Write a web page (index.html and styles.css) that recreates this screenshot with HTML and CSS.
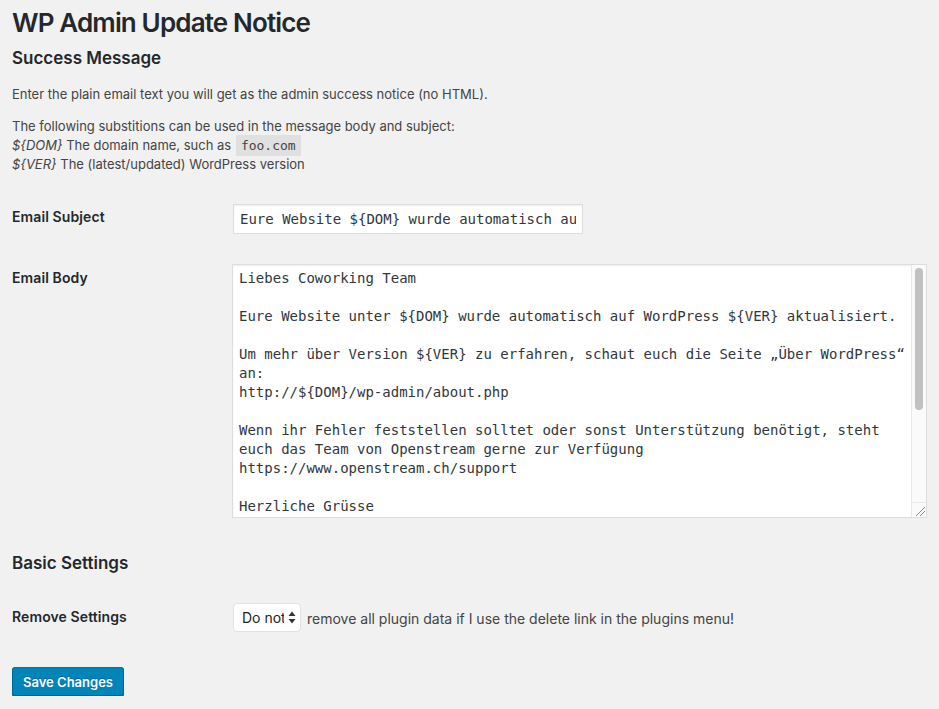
FILE: index.html
```html
<!DOCTYPE html>
<html lang="de">
<head>
<meta charset="utf-8">
<title>WP Admin Update Notice</title>
<link rel="stylesheet" href="styles.css">
</head>
<body>
<div class="wrap">
  <h1 class="page-title">WP Admin Update Notice</h1>
  <h2 class="section-title">Success Message</h2>
  <p class="desc">Enter the plain email text you will get as the admin success notice (no HTML).</p>
  <p class="desc">The following substitions can be used in the message body and subject:<br>
    <em>${DOM}</em> The domain name, such as <code>foo.com</code><br>
    <em>${VER}</em> The (latest/updated) WordPress version</p>

  <div class="form-table">
    <div class="row">
      <div class="th">Email Subject</div>
      <div class="td"><input class="regular-text" type="text" value="Eure Website ${DOM} wurde automatisch auf WordPress ${VER} aktualisiert"></div>
    </div>
    <div class="row">
      <div class="th">Email Body</div>
      <div class="td">
        <div class="textarea-wrap">
          <textarea class="large-text" wrap="off">Liebes Coworking Team

Eure Website unter ${DOM} wurde automatisch auf WordPress ${VER} aktualisiert.

Um mehr über Version ${VER} zu erfahren, schaut euch die Seite „Über WordPress“
an:
http://${DOM}/wp-admin/about.php

Wenn ihr Fehler feststellen solltet oder sonst Unterstützung benötigt, steht
euch das Team von Openstream gerne zur Verfügung
https://www.openstream.ch/support

Herzliche Grüsse
Euer Openstream Team

--
Openstream Internet Solutions
https://www.openstream.ch
</textarea>
          <div class="scrollbar" aria-hidden="true"><div class="thumb"></div></div>
          <div class="resizer" aria-hidden="true">
            <svg width="13" height="13" viewBox="0 0 13 13"><path d="M3 12 L12 3 M7 12 L12 7" stroke="#8a8a8a" stroke-width="1" fill="none"/></svg>
          </div>
        </div>
      </div>
    </div>
  </div>

  <h2 class="section-title basic">Basic Settings</h2>

  <div class="form-table">
    <div class="row">
      <div class="th">Remove Settings</div>
      <div class="td inline">
        <select class="small-select">
          <option>Do not</option>
          <option>Do</option>
        </select>
        <span class="inline-text">remove all plugin data if I use the delete link in the plugins menu!</span>
      </div>
    </div>
  </div>

  <p class="submit"><button class="button-primary" type="button">Save Changes</button></p>
</div>
</body>
</html>
```
FILE: styles.css
```css
html, body {
  margin: 0;
  padding: 0;
  background: #f1f1f1;
}

body {
  font-family: "Inter", "Liberation Sans", sans-serif;
  font-size: 13px;
  line-height: 1.5;
  color: #444;
}

.wrap {
  padding: 0 12px;
}

.page-title {
  margin: 0;
  padding: 6px 0 0;
  font-size: 26px;
  line-height: 34px;
  font-weight: 600;
  color: #23282d;
  letter-spacing: -0.85px;
}

.section-title {
  margin: 6px 0 14px;
  font-size: 17px;
  line-height: 25px;
  font-weight: 600;
  color: #23282d;
}

.desc {
  margin: 13px 0;
  line-height: 19px;
}

.desc em {
  font-style: italic;
}

code {
  font-family: "DejaVu Sans Mono", monospace;
  font-size: 13px;
  background: #e0e0e0;
  padding: 3px 5px;
  margin: 0 1px;
}

.form-table {
  margin-top: 14px;
}

.row {
  display: grid;
  grid-template-columns: 220px 1fr;
}

.th {
  padding: 20px 10px 20px 0;
  font-size: 14px;
  line-height: 18px;
  font-weight: 600;
  color: #23282d;
  letter-spacing: 0.1px;
}

.td {
  padding: 15px 0;
}

.td.inline {
  display: flex;
  align-items: center;
  gap: 6px;
  align-self: start;
}

.regular-text {
  box-sizing: border-box;
  width: 350px;
  height: 30px;
  margin: 1px 0 0 1px;
  padding: 2px 6px;
  border: 1px solid #ddd;
  box-shadow: inset 0 1px 2px rgba(0,0,0,.07);
  background: #fff;
  color: #32373c;
  font-family: "DejaVu Sans Mono", monospace;
  font-size: 14px;
  outline: none;
  display: block;
}

.textarea-wrap {
  position: relative;
  margin-top: 0;
}

.large-text {
  box-sizing: border-box;
  display: block;
  width: 100%;
  height: 254px;
  margin: 0;
  padding: 4px 22px 3px 6px;
  border: 1px solid #ddd;
  box-shadow: inset 0 1px 2px rgba(0,0,0,.07);
  background: #fff;
  color: #32373c;
  font-family: "DejaVu Sans Mono", monospace;
  font-size: 14px;
  line-height: 19px;
  white-space: pre;
  overflow: hidden;
  resize: none;
  outline: none;
}

.scrollbar {
  position: absolute;
  top: 1px;
  right: 1px;
  bottom: 15px;
  width: 15px;
  box-sizing: border-box;
  background: #fafafa;
  border-left: 1px solid #e8e8e8;
}

.thumb {
  margin: 3px 0 0 3px;
  width: 8px;
  height: 142px;
  border-radius: 4px;
  background: #c1c1c1;
}

.resizer {
  position: absolute;
  right: 1px;
  bottom: 1px;
  width: 15px;
  height: 15px;
  box-sizing: border-box;
  background: #fafafa;
  border-top: 1px solid #e8e8e8;
  border-left: 1px solid #e8e8e8;
  display: flex;
  align-items: flex-end;
  justify-content: flex-end;
}

.resizer svg {
  display: block;
}

.section-title.basic {
  margin: 18px 0 12px;
}

.basic + .form-table {
  margin-top: 0;
}

.small-select {
  -webkit-appearance: none;
  appearance: none;
  box-sizing: border-box;
  width: 68px;
  height: 29px;
  margin: 0 0 1px 1px;
  padding: 0 16px 0 8px;
  border: 1px solid #e2e2e2;
  border-radius: 4px;
  background: #fff url("data:image/svg+xml;utf8,<svg xmlns='http://www.w3.org/2000/svg' width='8' height='13' viewBox='0 0 8 13'><path d='M4 0.5 L7.5 5 H0.5 Z M4 12.5 L7.5 8 H0.5 Z' fill='%23333'/></svg>") no-repeat right 4px center;
  font-family: "Inter", "Liberation Sans", sans-serif;
  font-size: 14px;
  color: #222;
  outline: none;
}

.inline-text {
  font-size: 14px;
  color: #444;
}

.submit {
  margin: 19px 0 0;
  padding: 0;
}

.button-primary {
  box-sizing: border-box;
  height: 29px;
  padding: 0 10px;
  border: 1px solid;
  border-color: #0073aa #006799 #006799;
  border-radius: 3px;
  background: #0085ba;
  box-shadow: 0 1px 0 #006799;
  color: #fff;
  font-family: "Inter", "Liberation Sans", sans-serif;
  font-size: 13px;
  font-weight: 600;
  text-shadow: 0 -1px 1px #006799;
  cursor: pointer;
}
```
